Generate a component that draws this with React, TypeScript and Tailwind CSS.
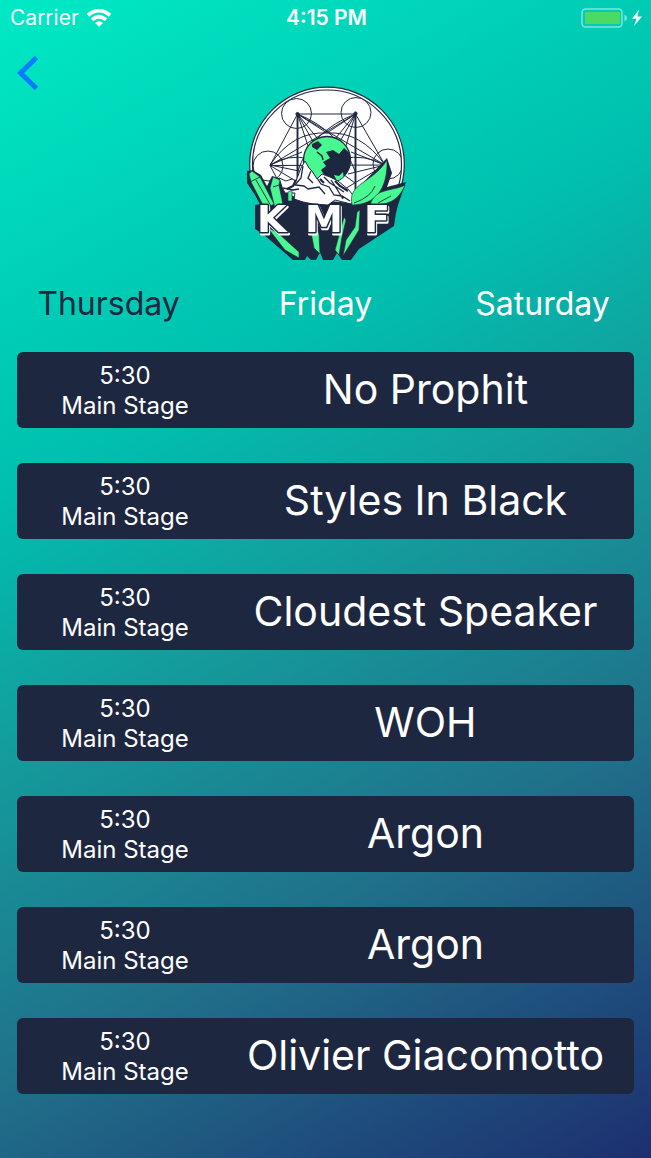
import { useState } from "react";

const days = ["Thursday", "Friday", "Saturday"];

const sets = [
  "No Prophit",
  "Styles In Black",
  "Cloudest Speaker",
  "WOH",
  "Argon",
  "Argon",
  "Olivier Giacomotto",
];

function WifiIcon() {
  return (
    <svg className="h-[18px] w-6" viewBox="0 0 24 18" fill="none" stroke="#fff" strokeWidth="3.8" aria-hidden="true">
      <path d="M1 6.2 Q12 -3.2 23 6.2" />
      <path d="M5 10.8 Q12 4.8 19 10.8" />
      <path d="M12 17.8 L8 13.9 Q12 10.8 16 13.9 Z" fill="#fff" stroke="none" />
    </svg>
  );
}

function BatteryIcon() {
  return (
    <svg className="h-5 w-[62px]" viewBox="0 0 62 20" aria-hidden="true">
      <rect x="1" y="1" width="40" height="18" rx="3.5" fill="none" stroke="#fff" strokeOpacity=".5" strokeWidth="1.5" />
      <rect x="4" y="4" width="35" height="12" rx="1" fill="#4cd964" />
      <path d="M43.5 6.5 Q46 7.5 46 10 T43.5 13.5 Z" fill="#fff" fillOpacity=".5" />
      <path d="M58 1.5 L51 10.8 H55.6 L53 18 L61 8.4 H56.3 Z" fill="#fff" />
    </svg>
  );
}

const hubs = [
  [61.5, 34],
  [119.5, 34],
  [34, 85.5],
  [149, 85],
  [61.5, 137],
  [119.5, 137],
];

const rings = [
  [60.5, 33.5],
  [120, 32.5],
  [32, 86],
  [152, 84],
];

function Logo() {
  return (
    <svg className="h-[190px] w-[180px]" viewBox="0 0 180 190" role="img" aria-label="KMF">
      <defs>
        <clipPath id="disc">
          <circle cx="91" cy="84.5" r="74.5" />
        </clipPath>
        <clipPath id="globe">
          <circle cx="91" cy="80" r="23.5" />
        </clipPath>
      </defs>
      <circle cx="91" cy="84.5" r="77.3" fill="#fff" stroke="#1e2740" strokeWidth="1.2" />
      <circle cx="91" cy="84.5" r="74.5" fill="none" stroke="#1e2740" strokeWidth="1.2" />
      <g clipPath="url(#disc)" fill="none" stroke="#1e2740" strokeWidth="1">
        {rings.map(([x, y]) => (
          <circle key={`${x}`} cx={x} cy={y} r="15" />
        ))}
        {hubs.flatMap(([x, y], i) =>
          hubs.slice(i + 1).map(([u, v], j) => <path key={`${i}-${j}`} d={`M${x} ${y}L${u} ${v}`} />),
        )}
        <path d="M61.5 34 Q104 51 119.5 92 M119.5 34 Q75 51 61.5 92 M34 85 Q57 51 91 53 Q125 51 149 85 M61.5 34 L82 59 M61.5 34 L91 53 L119.5 34 M119.5 34 L99 59 M61.5 34 L73 69 M119.5 34 L109 69" />
        <path d="M34 85 Q69 63 119 103 M149 85 Q108 63 62 103 M34 85 L66 72 M34 85 L68 92 M149 85 L115 72 M149 85 L112 94" />
        <path d="M61.5 34 V110 M119.5 34 V110" strokeWidth="1.9" />
        <circle cx="61.5" cy="34" r="1.6" fill="#1e2740" />
        <circle cx="119.5" cy="33.5" r="1.6" fill="#1e2740" />
      </g>

      <path d="M11 91 L17 90 L25 95 L31 106 L36 96 L46 99 L49 112 L61 118 L115 123 L120 110 L151 78 L156 93 L151 107 L170 102 L162 125 L160 133 L158 146 L123 169 L115 180 H106 L101 173 L97 180 H87 L84 172 L80 180 H75 L71 176 L69 180 H57 L27 154 L19 149 V125 L25 124 L11 103 Z" fill="#1e2740" />

      <circle cx="91" cy="80" r="23.5" fill="#48f891" stroke="#1e2740" strokeWidth="1.3" />
      <g clipPath="url(#globe)" fill="#1e2740">
        <path d="M76 64 L82 61 L86 65 L81 70 L76 67 Z M97 70 L103 74 L108 68 L116 75 V104 H104 L98 100 L89 96 L85 90 L90 86 L87 82 L94 78 L90 72 Z" />
        <path d="M81 72 L86 76 L87 80" fill="none" stroke="#1e2740" strokeWidth="1.5" />
        <path d="M98 95 L103 96 L107 92 L108 100 L101 101 Z" fill="#48f891" />
      </g>

      <path d="M43 98 L50 101 L56 99 L60 101 L65 88 L69 81 L73 88 L76 91 L81 99 L86 94 L94 97 L102 101 L113 110 L119 118 L115 124 L99 120 L92 125 L77 124 L67 122 L58 119 L59 113 L49 113 L46 107 Z" fill="#fff" stroke="#1e2740" strokeWidth="1" strokeLinejoin="round" />
      <g fill="none" stroke="#1e2740" strokeWidth="1.3">
        <path d="M67 86 L65 98 L59 105 L68 106 L72 109 L83 107 L89 114 M75 91 L72 98 L77 103 M81 98 L85 104 L93 107 L98 115 L106 116 L114 121 M88 97 L94 103 L102 108 L108 112 M47 108 L57 110 L63 109 M95 100 L99 106 L107 119" />
        <path d="M60 100 L57 106 L51 109 M84 99 L88 103 M99 101 L104 106 L112 111" strokeWidth="2.2" />
      </g>

      <g fill="#48f891" stroke="#1e2740" strokeWidth=".6" strokeLinejoin="round">
        <path d="M13 94 L16 91 L24 97 L38 124 L29 129 L15 102 Z" />
        <path d="M34 108 L37 97 L44 100 L43 105 L47 125 L39 128 Z" />
        <path d="M52 112 L56 110 V121 L52 121 Z" />
        <path d="M116 125 C111 103 136 104 151 80 C152 109 139 125 116 125 Z" />
        <path d="M134 125 C140 107 156 112 169 105 C162 122 151 125 134 125 Z" />
        <path d="M31 147 L42 153 L63 172 V178 L49 170 Z M77 138 L83 154 L84 174 L78 168 L74 147 Z M108 137 L110 140 L106 157 L103 175 L99 170 Z M121 132 L124 130 L123 150 L107 176 L110 160 L119 147 Z" />
      </g>
      <path d="M118 123 Q135 117 139 106 M142 123 L155 116 M14 102 L24 97 M20 100 L35 126 M37 107 L43 105 M64 152 L77 178" fill="none" stroke="#1e2740" strokeWidth=".9" />

      <g className="drop-shadow-[1px_2px_0_#fff]" aria-hidden="true">
        <text
          className="font-['DejaVu_Sans',sans-serif]"
          x="21 69 128"
          y="152"
          fontSize="38"
          fontWeight="700"
          fill="#fff"
          stroke="#1e2740"
          strokeWidth="3"
          strokeLinejoin="round"
          paintOrder="stroke"
        >
          KMF
        </text>
      </g>
    </svg>
  );
}

export default function App() {
  const [day, setDay] = useState("Thursday");
  return (
    <div className="min-h-screen bg-[linear-gradient(151deg,#00eac4_0%,#00bfae_33%,#149c9c_50%,#20708a_72%,#1d2f70_100%)] font-[Inter,sans-serif] text-white">
      <header className="grid h-9 grid-cols-3 items-center pr-2 pl-[10px] text-[21px] leading-9">
        <div className="flex items-center gap-2">
          <span>Carrier</span>
          <WifiIcon />
        </div>
        <time className="text-center font-semibold">4:15 PM</time>
        <div className="flex justify-end">
          <BatteryIcon />
        </div>
      </header>

      <button type="button" aria-label="Back" className="ml-4 mt-[19px] block h-9 w-6">
        <svg className="h-9 w-6" viewBox="0 0 24 36" fill="none" stroke="#087cff" strokeWidth="5" aria-hidden="true">
          <path d="M20.5 2.5 L4.5 18 L20.5 33.5" />
        </svg>
      </button>

      <div className="-mt-[11px] flex justify-center">
        <Logo />
      </div>

      <nav className="grid grid-cols-3 pt-[10px]">
        {days.map((name) => (
          <button
            key={name}
            type="button"
            onClick={() => setDay(name)}
            className={name === day ? "text-[32px] leading-[48px] text-[#1e2740]" : "text-[32px] leading-[48px]"}
          >
            {name}
          </button>
        ))}
      </nav>

      <ul className="flex flex-col gap-[35px] px-[17px] pt-6 pb-16">
        {sets.map((artist, i) => (
          <li key={i} className="flex h-[76px] items-center rounded-md bg-[#1e2740]">
            <div className="w-[35%] pt-[2px] text-center text-2xl leading-[30px]">
              <p>5:30</p>
              <p>Main Stage</p>
            </div>
            <h2 className="flex-1 pr-4 pb-[2px] text-center text-[41px] leading-[72px] whitespace-nowrap">{artist}</h2>
          </li>
        ))}
      </ul>
    </div>
  );
}
